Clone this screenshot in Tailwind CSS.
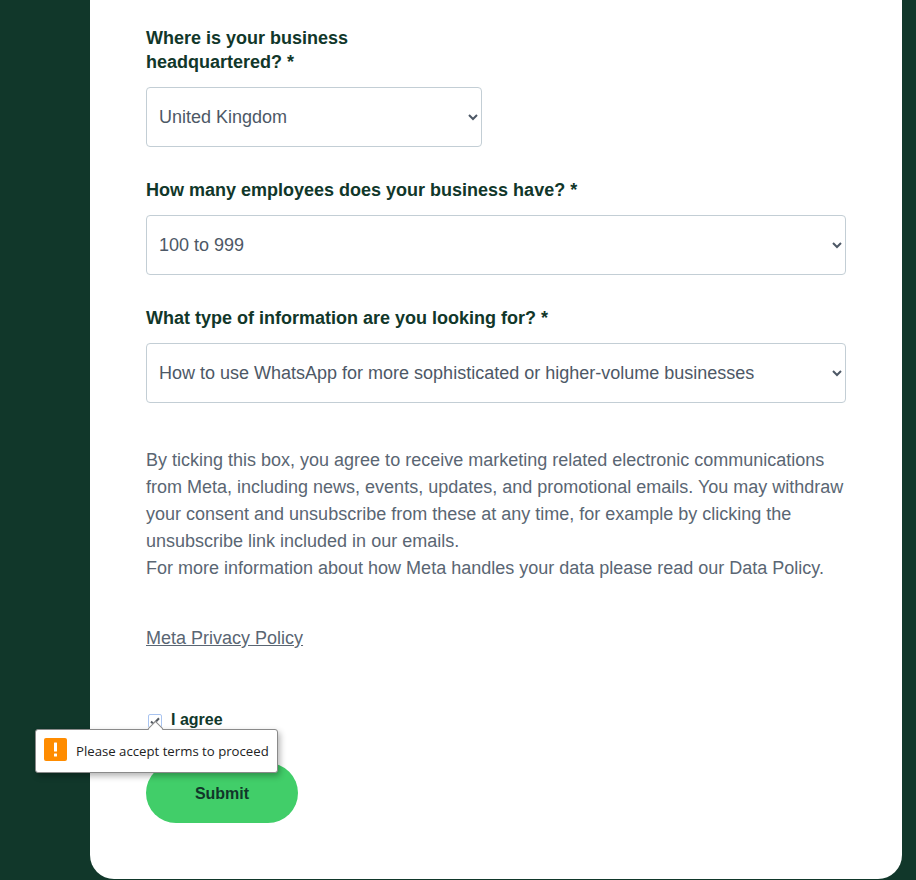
<!DOCTYPE html>
<html lang="en">
<head>
<meta charset="utf-8">
<script src="https://cdn.jsdelivr.net/npm/@tailwindcss/browser@4"></script>
<title>Form</title>
</head>
<body class="bg-[#11372a] font-['Liberation_Sans',Arial,sans-serif]">
<div class="relative h-[880px] w-[916px] overflow-hidden">
  <main class="ml-[90px] mr-[14px] h-[879px] rounded-b-[24px] bg-white pl-[56px] pr-[56px] pt-[26px]">
    <form class="flex flex-col">
      <label class="w-[260px] text-[18px] leading-[24px] font-bold text-[#11372a]">Where is your business headquartered? *</label>
      <select class="mt-[13px] h-[60px] w-[336px] rounded-[4px] border border-[#c3ced5] bg-white pl-[8px] pr-[8px] text-[18px] text-[#4d5866]"><option>United Kingdom</option></select>
      <label class="mt-[31px] text-[18px] leading-[24px] font-bold text-[#11372a]">How many employees does your business have? *</label>
      <select class="mt-[13px] h-[60px] w-[700px] rounded-[4px] border border-[#c3ced5] bg-white pl-[8px] pr-[8px] text-[18px] text-[#4d5866]"><option>100 to 999</option></select>
      <label class="mt-[31px] text-[18px] leading-[24px] font-bold text-[#11372a]">What type of information are you looking for? *</label>
      <select class="mt-[13px] h-[60px] w-[700px] rounded-[4px] border border-[#c3ced5] bg-white pl-[8px] pr-[8px] text-[18px] text-[#4d5866]"><option>How to use WhatsApp for more sophisticated or higher-volume businesses</option></select>
      <p class="mt-[44px] text-[18px] leading-[27px] text-[#5a6673]">By ticking this box, you agree to receive marketing related electronic communications from Meta, including news, events, updates, and promotional emails. You may withdraw your consent and unsubscribe from these at any time, for example by clicking the unsubscribe link included in our emails.<br>For more information about how Meta handles your data please read our Data Policy.</p>
      <a href="#" class="mt-[43px] self-start text-[18px] leading-[27px] text-[#5a6673] underline">Meta Privacy Policy</a>
      <div class="mt-[56px] flex items-center gap-[9px] pl-[2px]">
        <span class="mt-[2px] flex size-[14px] items-center justify-center rounded-[2px] border border-[#a9c4f0] bg-white">
          <svg viewBox="0 0 12 12" class="size-[12px]" fill="none" stroke="#555b63" stroke-width="2"><path d="M2 6.5 4.6 9 10 3.2"/></svg>
        </span>
        <span class="text-[16px] leading-[24px] font-bold text-[#11372a]">I agree</span>
      </div>
      <button type="button" class="mt-[31px] h-[60px] w-[152px] rounded-[30px] bg-[#41ce69] pt-[2px] text-[16px] font-bold text-[#11372a]">Submit</button>
    </form>
  </main>
  <div class="absolute left-[35px] top-[729px] flex h-[44px] w-[243px] items-center gap-[9px] rounded-[3px] border border-[#8a8a8a] bg-white pl-[8px] font-['Open_Sans',sans-serif] text-[13.2px] text-[#222222] shadow-[2px_3px_6px_rgba(0,0,0,0.3)]">
    <span class="absolute left-[114px] top-[-7px] size-[11px] rotate-45 border-l border-t border-[#8a8a8a] bg-white"></span>
    <span class="-mt-[3px] flex size-[23px] items-center justify-center rounded-[2px] bg-[#ff8c00]">
      <svg viewBox="0 0 23 23" class="size-[23px]" fill="#fff"><rect x="10" y="4.5" width="3" height="9" rx="0.5"/><rect x="10" y="15.5" width="3" height="3" rx="0.5"/></svg>
    </span>
    <span class="mt-[1px]">Please accept terms to proceed</span>
  </div>
</div>
</body>
</html>
